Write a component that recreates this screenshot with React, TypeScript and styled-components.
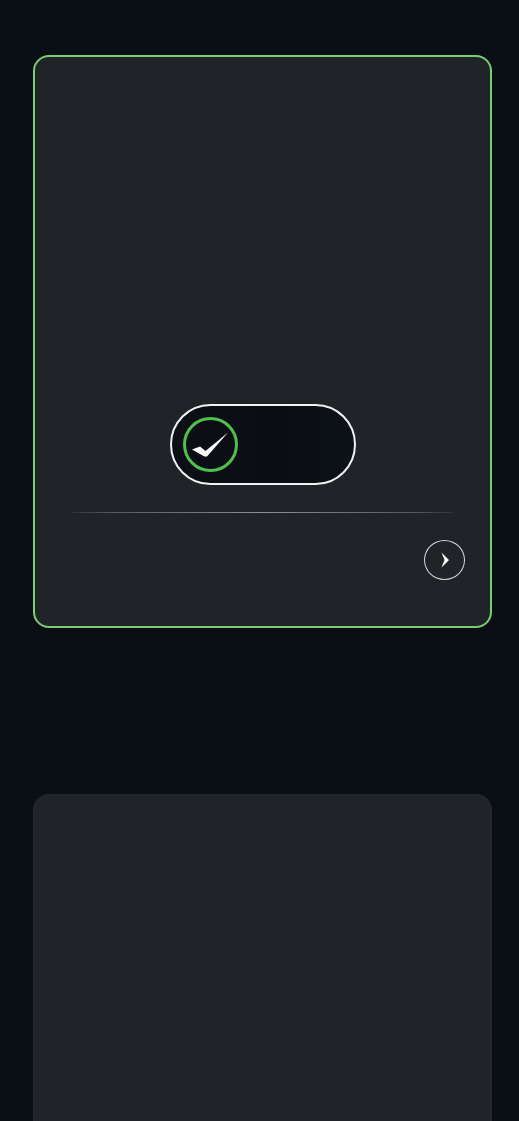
import React from 'react';
import styled, { createGlobalStyle } from 'styled-components';

const GlobalStyle = createGlobalStyle`
  html, body {
    margin: 0;
    padding: 0;
    background-color: #0a0e15;
    font-family: 'Inter', 'Liberation Sans', sans-serif;
  }
`;

const Page = styled.div`
  padding: 55px 27px 0 33px;
  box-sizing: border-box;
  display: flex;
  flex-direction: column;
  gap: 166px;
  overflow: hidden;
  height: 1121px;
`;

const Card = styled.section<{ $active?: boolean }>`
  box-sizing: border-box;
  width: 459px;
  min-height: ${p => (p.$active ? '573px' : '400px')};
  flex-shrink: 0;
  border-radius: 16px;
  background-color: #202428;
  border: 2px solid ${p => (p.$active ? '#7acd74' : '#23272c')};
  display: flex;
  flex-direction: column;
  padding: 0 25px 46px;
`;

const Spacer = styled.div`
  flex: 1;
`;

const Toggle = styled.button`
  align-self: center;
  width: 186px;
  height: 81px;
  box-sizing: border-box;
  border: 2px solid #f2f2f2;
  border-radius: 41px;
  background: linear-gradient(90deg, #0c0f16 0%, #0a0d14 60%, #0d1118 100%);
  padding: 0 0 0 11px;
  display: flex;
  align-items: center;
  margin-bottom: 27px;
  cursor: pointer;
`;

const Knob = styled.span`
  width: 55px;
  height: 55px;
  box-sizing: border-box;
  border-radius: 50%;
  border: 3px solid #4fbf4d;
  display: flex;
  align-items: center;
  justify-content: center;
`;

const Divider = styled.div`
  height: 1px;
  margin: 0 11px 27px 12px;
  background: linear-gradient(
    90deg,
    rgba(120, 124, 128, 0.15) 0%,
    rgba(120, 124, 128, 0.6) 10%,
    rgba(160, 164, 168, 0.85) 50%,
    rgba(120, 124, 128, 0.6) 90%,
    rgba(120, 124, 128, 0.15) 100%
  );
`;

const Footer = styled.div`
  display: flex;
  justify-content: flex-end;
`;

const NextButton = styled.button`
  width: 41px;
  height: 40px;
  box-sizing: border-box;
  border-radius: 50%;
  border: 1.5px solid #d8d8d8;
  background: transparent;
  padding: 0;
  display: flex;
  align-items: center;
  justify-content: center;
  cursor: pointer;
`;

const App: React.FC = () => {
  return (
    <>
      <GlobalStyle />
      <Page>
        <Card $active>
          <Spacer />
          <Toggle aria-label="toggle">
            <Knob>
              <svg width="48" height="48" viewBox="0 0 48 48">
                <path d="M6 28.5 L14 25.5 L19.5 30 L42 11.5 L21 35.5 L18.5 35.5 Z" fill="#ffffff" />
              </svg>
            </Knob>
          </Toggle>
          <Divider />
          <Footer>
            <NextButton aria-label="next">
              <svg width="18" height="18" viewBox="0 0 18 18">
                <path d="M5.5 1.5 L13 9 L5.5 16.5 L8.5 9 Z" fill="#ffffff" />
              </svg>
            </NextButton>
          </Footer>
        </Card>
        <Card />
      </Page>
    </>
  );
};

export default App;
